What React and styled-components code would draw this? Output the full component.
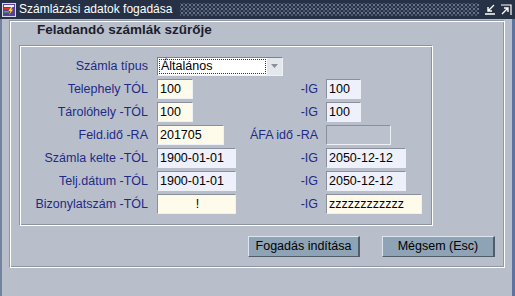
import React from "react";
import styled, { createGlobalStyle } from "styled-components";

const Global = createGlobalStyle`
  html, body { margin: 0; padding: 0; background: #b8bfcb; }
  body { font-family: "Liberation Sans", Arial, sans-serif; }
  * { box-sizing: border-box; }
`;

const Window = styled.div`
  width: 515px;
  height: 296px;
  display: flex;
  flex-direction: column;
  background: #b8bfcb;
  overflow: hidden;
`;

const TitleBar = styled.div`
  height: 19px;
  flex: none;
  display: flex;
  align-items: center;
  background: #263145;
  padding-left: 2px;
  padding-right: 3px;
`;

const TitleText = styled.span`
  color: #ffffff;
  font-size: 12px;
  margin-left: 3px;
  white-space: nowrap;
  line-height: 19px;
`;

const Dots = styled.div`
  flex: 1;
  align-self: stretch;
  margin: 3px 6px 3px 8px;
  background:
    radial-gradient(circle, #66728a 0.9px, transparent 1.3px) 0 0 / 4px 4px,
    radial-gradient(circle, #4c576c 0.9px, transparent 1.3px) 2px 2px / 4px 4px;
`;

const TitleButtons = styled.div`
  display: flex;
  gap: 4px;
  align-items: center;
`;

const Body = styled.div`
  flex: 1;
  display: flex;
  flex-direction: column;
  border-left: 2px solid #71839f;
  border-right: 3px solid #5d73a0;
  padding: 2px 7px 0 8px;
`;

const Frame = styled.div`
  height: 247px;
  border: 1px solid #ffffff;
  box-shadow: -1px -1px 0 #9098a6, inset -1px -1px 0 #9098a6;
  display: flex;
  flex-direction: column;
`;

const Heading = styled.div`
  font-size: 13.5px;
  font-weight: bold;
  color: #1b1e2c;
  line-height: 16px;
  margin-left: 26px;
`;

const Group = styled.div`
  margin: 8px 0 0 9px;
  width: 413px;
  border: 1px solid #ffffff;
  box-shadow: -1px -1px 0 #8c93a0, inset -1px -1px 0 #8c93a0;
  padding: 9px 0 11px 0;
  display: flex;
  flex-direction: column;
  gap: 3px;
`;

const Row = styled.div`
  height: 20px;
  display: flex;
  align-items: center;
`;

const Label = styled.div`
  width: ${(p) => p.$w}px;
  flex: none;
  text-align: right;
  color: #1f2a86;
  font-size: 12.5px;
  white-space: nowrap;
  margin-right: ${(p) => p.$gap}px;
`;

const Cell = styled.div`
  width: 79px;
  flex: none;
  display: flex;
`;

const Field = styled.div`
  width: ${(p) => p.$w}px;
  height: 20px;
  flex: none;
  background: ${(p) => p.$bg};
  border-top: 1px solid #8a909b;
  border-left: 1px solid #8a909b;
  border-bottom: 1px solid #eef1f6;
  border-right: 1px solid #eef1f6;
  color: #000;
  font-size: 12.5px;
  line-height: 18px;
  padding-left: 2px;
  text-align: ${(p) => (p.$center ? "center" : "left")};
  white-space: nowrap;
  overflow: hidden;
`;

const Select = styled.div`
  width: 126px;
  height: 19px;
  display: flex;
  background: #ffffff;
  border-top: 1px solid #7c8390;
  border-left: 1px solid #7c8390;
  border-bottom: 1px solid #eef1f6;
  border-right: 1px solid #eef1f6;
`;

const SelectValue = styled.div`
  flex: 1;
  margin: 1px;
  border: 1px dotted #333;
  font-size: 12.5px;
  line-height: 13px;
  padding-left: 1px;
  color: #000;
`;

const DropBtn = styled.div`
  width: 15px;
  background: #e4e7ec;
  display: flex;
  align-items: center;
  justify-content: center;
`;

const ButtonRow = styled.div`
  display: flex;
  justify-content: flex-end;
  gap: 22px;
  margin-top: 10px;
  padding-right: 9px;
`;

const Button = styled.div`
  width: ${(p) => p.$w}px;
  height: 21px;
  background: #8fa3b6;
  border-top: 1px solid #dde5ee;
  border-left: 1px solid #dde5ee;
  border-bottom: 1px solid #4e5c6b;
  border-right: 2px solid #4e5c6b;
  color: #000;
  font-size: 12.5px;
  line-height: 19px;
  text-align: center;
  white-space: nowrap;
`;

const CREAM = "#fffbea";
const LAV = "#eef0fb";
const DIS = "#bcc2cd";

function AppIcon() {
  return (
    <svg width="14" height="14" viewBox="0 0 14 14">
      <rect x="0.5" y="0.5" width="13" height="13" fill="#5a3fa0" stroke="#d8d8e8" />
      <rect x="2" y="2" width="10" height="2" fill="#f0f0f0" />
      <rect x="2" y="5" width="6" height="1.5" fill="#e83030" />
      <rect x="2" y="8" width="5" height="1.5" fill="#30c040" />
      <path d="M9 4 L6.5 8 L8.5 8 L7 12 L11 6.5 L9 6.5 L10.5 4 Z" fill="#ffe020" />
    </svg>
  );
}

function MinIcon() {
  return (
    <svg width="11" height="11" viewBox="0 0 11 11">
      <path d="M9 1 L3 7 M3 3 L3 7 L7 7 M0 10 L10 10" stroke="#fff" strokeWidth="1.4" fill="none" />
    </svg>
  );
}

function MaxIcon() {
  return (
    <svg width="12" height="12" viewBox="0 0 12 12">
      <path d="M1 1 L11 1 L11 11" stroke="#fff" strokeWidth="1.2" fill="none" />
      <path d="M2 10 L8 4 M4 4 L8 4 L8 8" stroke="#fff" strokeWidth="1.4" fill="none" />
    </svg>
  );
}

const rows = [
  { label: "Telephely TÓL", v1: "100", w1: 36, bg1: CREAM, l2: "-IG", v2: "100", w2: 35, bg2: LAV },
  { label: "Tárolóhely -TÓL", v1: "100", w1: 36, bg1: CREAM, l2: "-IG", v2: "100", w2: 35, bg2: LAV },
  { label: "Feld.idő -RA", v1: "201705", w1: 67, bg1: CREAM, l2: "ÁFA idő -RA", v2: "", w2: 65, bg2: DIS },
  { label: "Számla kelte -TÓL", v1: "1900-01-01", w1: 79, bg1: LAV, l2: "-IG", v2: "2050-12-12", w2: 80, bg2: LAV },
  { label: "Telj.dátum -TÓL", v1: "1900-01-01", w1: 79, bg1: LAV, l2: "-IG", v2: "2050-12-12", w2: 80, bg2: LAV },
  { label: "Bizonylatszám -TÓL", v1: "!", w1: 79, bg1: CREAM, c1: true, l2: "-IG", v2: "zzzzzzzzzzzz", w2: 96, bg2: CREAM },
];

export default function App() {
  return (
    <>
      <Global />
      <Window>
        <TitleBar>
          <AppIcon />
          <TitleText>Számlázási adatok fogadása</TitleText>
          <Dots />
          <TitleButtons>
            <MinIcon />
            <MaxIcon />
          </TitleButtons>
        </TitleBar>
        <Body>
          <Frame>
            <Heading>Feladandó számlák szűrője</Heading>
            <Group>
              <Row>
                <Label $w={127} $gap={9}>Számla típus</Label>
                <Select>
                  <SelectValue>Általános</SelectValue>
                  <DropBtn>
                    <svg width="7" height="4" viewBox="0 0 7 4">
                      <path d="M0 0 L7 0 L3.5 4 Z" fill="#8a8f98" />
                    </svg>
                  </DropBtn>
                </Select>
              </Row>
              {rows.map((r) => (
                <Row key={r.label}>
                  <Label $w={127} $gap={9}>{r.label}</Label>
                  <Cell>
                    <Field $w={r.w1} $bg={r.bg1} $center={r.c1}>{r.v1}</Field>
                  </Cell>
                  <Label $w={82} $gap={8}>{r.l2}</Label>
                  <Field $w={r.w2} $bg={r.bg2}>{r.v2}</Field>
                </Row>
              ))}
            </Group>
            <ButtonRow>
              <Button $w={112}>Fogadás indítása</Button>
              <Button $w={113}>Mégsem (Esc)</Button>
            </ButtonRow>
          </Frame>
        </Body>
      </Window>
    </>
  );
}
